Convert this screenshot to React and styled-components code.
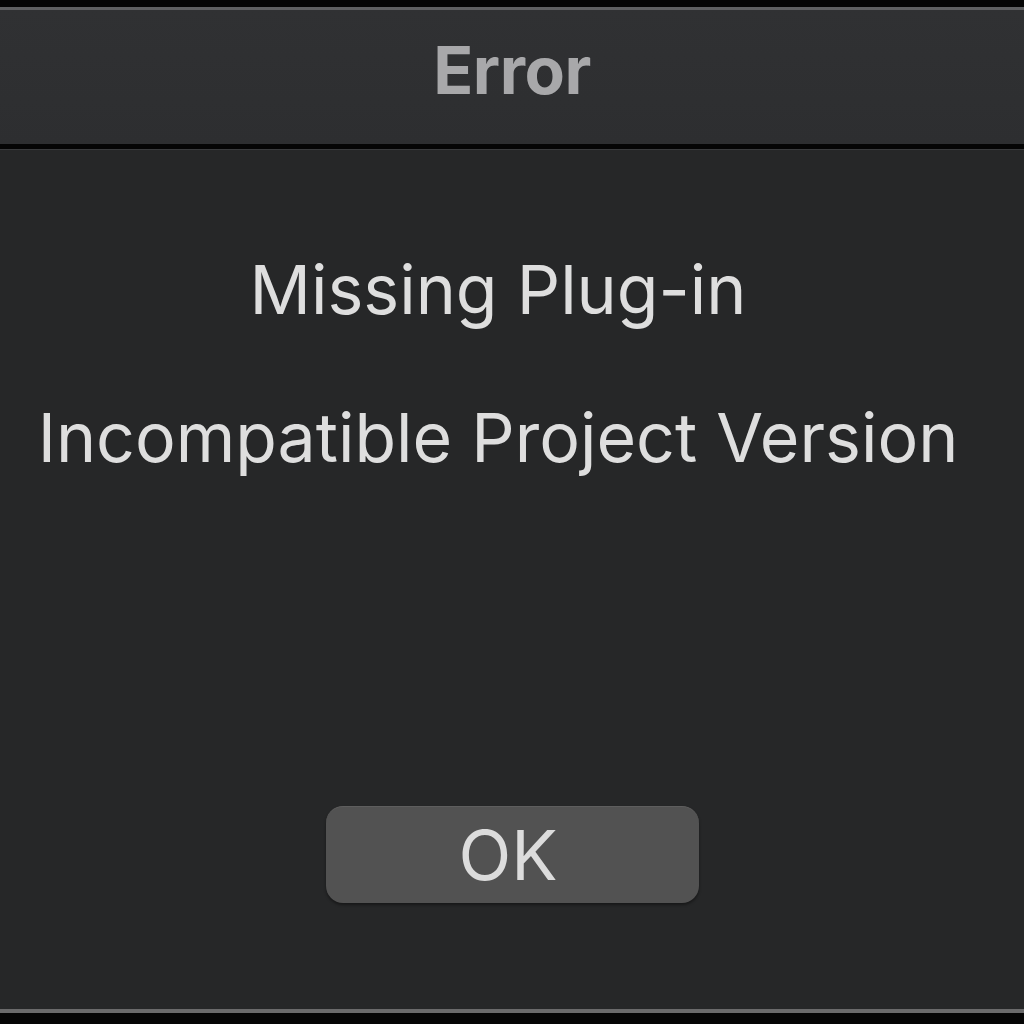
import React from "react";
import styled, { createGlobalStyle } from "styled-components";

const Global = createGlobalStyle`
  html, body { margin: 0; padding: 0; background: #000; }
  body { font-family: Inter, "Open Sans", "Liberation Sans", sans-serif; }
`;

const Screen = styled.div`
  width: 1024px;
  height: 1024px;
  background: #050505;
  padding-top: 7px;
  box-sizing: border-box;
  display: flex;
  flex-direction: column;
`;

const TitleBar = styled.div`
  height: 134px;
  box-sizing: content-box;
  border-top: 3px solid #5f6062;
  background: linear-gradient(#303133, #2d2e30);
  display: flex;
  align-items: center;
  justify-content: center;
  border-bottom: 5px solid #050505;
`;

const Title = styled.h1`
  margin: 0 0 14px 0;
  font-family: Inter, "Liberation Sans", sans-serif;
  font-weight: 700;
  font-size: 66px;
  letter-spacing: -0.5px;
  color: #a8a8aa;
`;

const Body = styled.div`
  height: 859px;
  border-top: 1px solid #3a3b3d;
  background: #262728;
  border-bottom: 4px solid #6a6a6b;
  display: flex;
  flex-direction: column;
  align-items: center;
`;

const Messages = styled.div`
  display: flex;
  flex-direction: column;
  align-items: center;
  padding-top: 89px;
  padding-right: 28px;
  gap: 48px;
`;

const Message = styled.p`
  margin: 0;
  font-size: 68px;
  line-height: 100px;
  font-weight: 400;
  color: #dedede;
  white-space: nowrap;
`;

const OkButton = styled.button`
  margin-top: auto;
  margin-bottom: 106px;
  width: 373px;
  height: 97px;
  border-radius: 17px;
  border: none;
  border-top: 1px solid #5e5e5e;
  background: #525252;
  box-shadow: 0 2px 3px rgba(0,0,0,0.4);
  color: #dcdcdc;
  font-family: Inter, "Liberation Sans", sans-serif;
  font-size: 69px;
  font-weight: 400;
  display: flex;
  align-items: center;
  justify-content: center;
  padding: 0 8px 0 0;
`;

export default function App() {
  return (
    <>
      <Global />
      <Screen>
        <TitleBar>
          <Title>Error</Title>
        </TitleBar>
        <Body>
          <Messages>
            <Message>Missing Plug-in</Message>
            <Message>Incompatible Project Version</Message>
          </Messages>
          <OkButton>OK</OkButton>
        </Body>
      </Screen>
    </>
  );
}
